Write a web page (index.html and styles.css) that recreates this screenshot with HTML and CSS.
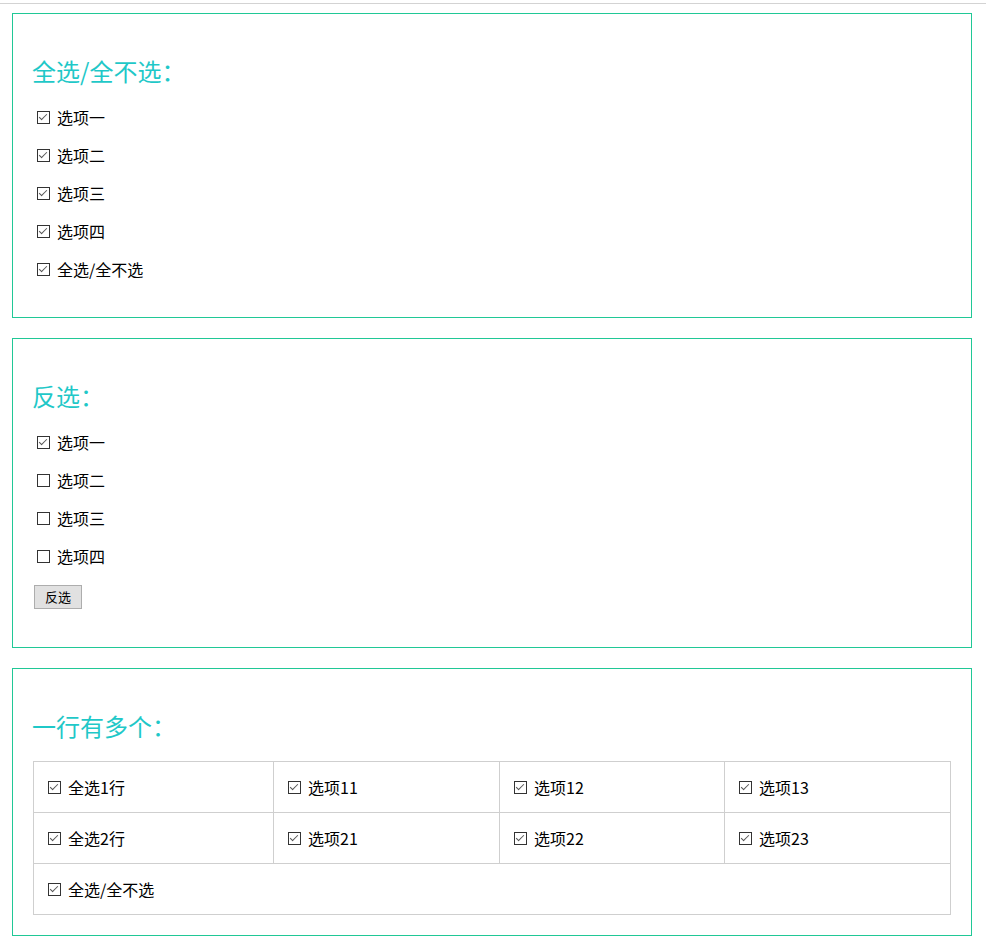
FILE: index.html
```html
<!DOCTYPE html>
<html lang="zh-CN">
<head>
  <meta charset="UTF-8">
  <meta name="viewport" content="width=device-width, initial-scale=1.0">
  <title>全选 / 反选</title>
  <link rel="stylesheet" href="styles.css">
</head>
<body>
  <div class="topline"></div>

  <div class="box box-all">
    <h2 class="box-title">全选/全不选：</h2>
    <label class="item"><input type="checkbox" checked> 选项一</label>
    <label class="item"><input type="checkbox" checked> 选项二</label>
    <label class="item"><input type="checkbox" checked> 选项三</label>
    <label class="item"><input type="checkbox" checked> 选项四</label>
    <label class="item"><input type="checkbox" checked> 全选/全不选</label>
  </div>

  <div class="box box-invert">
    <h2 class="box-title">反选：</h2>
    <label class="item"><input type="checkbox" checked> 选项一</label>
    <label class="item"><input type="checkbox"> 选项二</label>
    <label class="item"><input type="checkbox"> 选项三</label>
    <label class="item"><input type="checkbox"> 选项四</label>
    <button type="button" class="btn">反选</button>
  </div>

  <div class="box box-rows">
    <h2 class="box-title">一行有多个：</h2>
    <table class="grid">
      <colgroup>
        <col class="col-first">
        <col class="col-mid">
        <col class="col-mid2">
        <col>
      </colgroup>
      <tr>
        <td><label class="cell"><input type="checkbox" checked> 全选1行</label></td>
        <td><label class="cell"><input type="checkbox" checked> 选项11</label></td>
        <td><label class="cell"><input type="checkbox" checked> 选项12</label></td>
        <td><label class="cell"><input type="checkbox" checked> 选项13</label></td>
      </tr>
      <tr>
        <td><label class="cell"><input type="checkbox" checked> 全选2行</label></td>
        <td><label class="cell"><input type="checkbox" checked> 选项21</label></td>
        <td><label class="cell"><input type="checkbox" checked> 选项22</label></td>
        <td><label class="cell"><input type="checkbox" checked> 选项23</label></td>
      </tr>
      <tr>
        <td colspan="4"><label class="cell"><input type="checkbox" checked> 全选/全不选</label></td>
      </tr>
    </table>
  </div>
</body>
</html>
```

FILE: styles.css
```css
body {
  margin: 0;
  font-family: "Noto Sans CJK SC", "Noto Sans", sans-serif;
  font-size: 16px;
  color: #000;
  background: #fff;
}

.topline {
  margin-top: 3px;
  height: 1px;
  background: #d3d3d3;
}

.box {
  width: 960px;
  box-sizing: border-box;
  margin: 9px 0 0 12px;
  padding: 41px 20px 29px 20px;
  border: 1px solid #20c896;
}

.box + .box {
  margin-top: 20px;
}

.box-invert {
  padding-bottom: 38px;
}

.box-rows {
  padding-bottom: 20px;
}

.box-title {
  margin: 0 0 11px -1px;
  font-size: 24px;
  line-height: 32px;
  font-weight: normal;
  color: #1fc8c8;
}

.box-rows .box-title {
  margin-bottom: 19px;
}

.item {
  display: flex;
  align-items: center;
  height: 38px;
  line-height: 20px;
}

input[type="checkbox"] {
  appearance: none;
  -webkit-appearance: none;
  position: relative;
  width: 13px;
  height: 13px;
  margin: 0 7px 0 4px;
  border: 1px solid #333;
  background: #fff;
  box-sizing: border-box;
  flex: none;
}

input[type="checkbox"]:checked::after {
  content: "";
  position: absolute;
  left: 3px;
  top: 0px;
  width: 3px;
  height: 7px;
  border: solid #555;
  border-width: 0 1.5px 1.5px 0;
  transform: rotate(45deg);
}

.btn {
  display: block;
  width: 48px;
  height: 24px;
  margin: 10px 0 0 1px;
  padding: 0;
  font-family: inherit;
  font-size: 13px;
  line-height: 22px;
  color: #000;
  background: #e1e1e1;
  border: 1px solid #adadad;
  border-radius: 0;
}

.grid {
  width: 918px;
  border-collapse: collapse;
  table-layout: fixed;
}

.col-first {
  width: 240px;
}

.col-mid {
  width: 226px;
}

.col-mid2 {
  width: 225px;
}

.grid td {
  height: 50px;
  padding: 0 10px;
  border: 1px solid #cfcfcf;
}

.cell {
  display: flex;
  align-items: center;
  line-height: 20px;
}
```
